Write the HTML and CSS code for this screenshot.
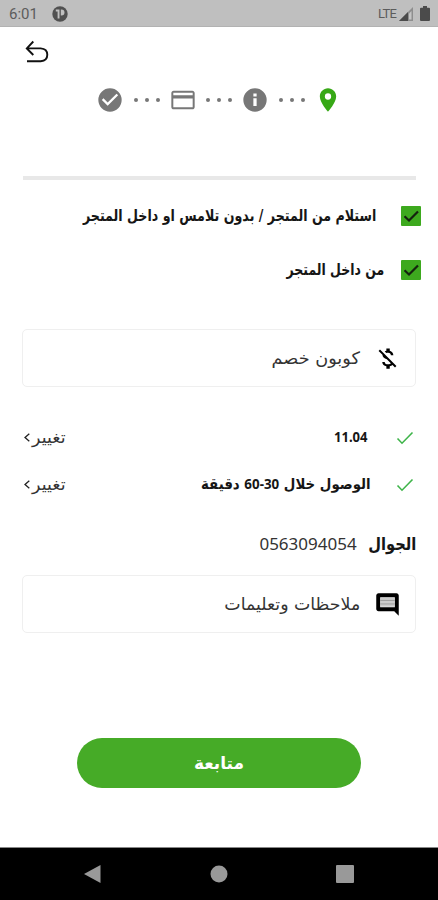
FILE: index.html
```html
<!DOCTYPE html>
<html lang="ar">
<head>
<meta charset="utf-8">
<meta name="viewport" content="width=device-width">
<title>متابعة الطلب</title>
<link rel="stylesheet" href="styles.css">
</head>
<body>
<header class="status">
  <span class="clock">6:01</span>
  <svg class="app-dot" viewBox="0 0 16 16"><circle cx="8" cy="8" r="7.7" fill="#505050"/><path d="M3.800 3.500h3.700v9H5.600V5.600H3.800zM8.800 3.500h.700a3 3 0 0 1 0 6h-.700z" fill="#bfbfbf"/></svg>
  <span class="lte">LTE</span>
  <svg class="signal" viewBox="0 0 14 14"><path d="M0 14 14 0v14z" fill="#8e8e8e"/><path d="M0 14 9 5v9z" fill="#4b4b4b"/><path d="M10 6.5 12.5 4v8.5H10z" fill="#c5c5c5"/></svg>
  <svg class="battery" viewBox="0 0 10 15"><path d="M3 0h4v1.7h2q1 0 1 1V14q0 1-1 1H1q-1 0-1-1V2.700q0-1 1-1h2z" fill="#4b4b4b"/></svg>
</header>
<div class="toolbar">
  <svg class="back" viewBox="0 0 24 24"><path d="M8.300 1.500 1.800 8.400l6.500 6.600M2.200 8.400h13.500q6.600.5 6.600 6.300t-6.600 6.600H2" fill="none" stroke="#111" stroke-width="1.900"/></svg>
</div>
<div class="steps">
  <svg class="step" viewBox="0 0 24 24"><path d="M12 2a10 10 0 1 0 0 20 10 10 0 0 0 0-20zm-2 15-5-5 1.410-1.410L10 14.170l7.590-7.590L19 8z"/></svg>
  <span class="dots"><i></i><i></i><i></i></span>
  <svg class="step" viewBox="0 0 24 24"><path d="M20 4H4c-1.110 0-1.990.890-1.990 2L2 18c0 1.110.890 2 2 2h16c1.110 0 2-.890 2-2V6c0-1.110-.890-2-2-2zm.300 14.300H3.700v-7.500h16.600zm0-10.300H3.700V5.700h16.600z"/></svg>
  <span class="dots"><i></i><i></i><i></i></span>
  <svg class="step" viewBox="0 0 24 24"><path d="M12 2a10 10 0 1 0 0 20 10 10 0 0 0 0-20zm1.400 15.200h-2.800v-6.700h2.800zm0-8.100h-2.800V6.500h2.800z"/></svg>
  <span class="dots"><i></i><i></i><i></i></span>
  <svg class="step current" viewBox="0 0 24 24"><path d="M12 2C8.130 2 5 5.130 5 9c0 5.250 7 13 7 13s7-7.750 7-13c0-3.870-3.130-7-7-7zm0 9.700a2.700 2.700 0 1 1 0-5.400 2.700 2.700 0 0 1 0 5.400z"/></svg>
</div>
<main class="content" dir="rtl">
  <hr class="rule">
  <div class="option option-store">
    <svg class="box" viewBox="0 0 20 20"><path d="M3.500 10.200 8 14.500l9-9"/></svg>
    <span class="label label-store">استلام من المتجر / بدون تلامس او داخل المتجر</span>
  </div>
  <div class="option option-inside">
    <svg class="box" viewBox="0 0 20 20"><path d="M3.500 10.200 8 14.500l9-9"/></svg>
    <span class="label label-inside">من داخل المتجر</span>
  </div>
  <div class="field">
    <svg class="field-icon" viewBox="0 0 24 24"><path d="M12.500 6.900c1.780 0 2.440.850 2.500 2.100h2.210c-.070-1.720-1.120-3.300-3.210-3.810V3h-3v2.160c-.530.120-1.030.300-1.480.540l1.470 1.470c.410-.170.910-.270 1.510-.270zM5.330 4.060 4.060 5.330 7.500 8.770c0 2.080 1.560 3.210 3.910 3.910l3.510 3.510c-.340.480-1.050.910-2.420.910-2.060 0-2.870-.920-2.980-2.100h-2.200c.120 2.190 1.760 3.420 3.680 3.830V21h3v-2.150c.960-.180 1.820-.550 2.450-1.120l2.220 2.220 1.270-1.270z"/></svg>
    <span class="hint hint-coupon">كوبون خصم</span>
  </div>
  <div class="row row-price">
    <svg class="tick" viewBox="0 0 18 14"><path d="m1.500 7.500 4.500 4.700L16.500 1.500"/></svg>
    <span class="value value-price">11.04</span>
    <span class="change"><span class="change-text">تغيير</span><svg class="chevron" viewBox="0 0 6 9"><path d="M5.300.700 1 4.500l4.300 3.800"/></svg></span>
  </div>
  <div class="row row-time">
    <svg class="tick" viewBox="0 0 18 14"><path d="m1.500 7.500 4.500 4.700L16.500 1.500"/></svg>
    <span class="value value-time">الوصول خلال <bdi dir="ltr">60-30</bdi> دقيقة</span>
    <span class="change"><span class="change-text">تغيير</span><svg class="chevron" viewBox="0 0 6 9"><path d="M5.300.700 1 4.500l4.300 3.800"/></svg></span>
  </div>
  <div class="phone">
    <span class="phone-label">الجوال</span>
    <span class="phone-number">0563094054</span>
  </div>
  <div class="field">
    <svg class="field-icon" viewBox="0 0 24 24"><path d="M6 6h12v8H6z" fill="#ccc"/><path fill-rule="evenodd" d="M22 4c0-1.100-.900-2-2-2H4c-1.100 0-2 .900-2 2v12c0 1.100.900 2 2 2h14l4 4zM18.500 14.500h-13v-9h13z"/><path d="M5.500 8.400h13M5.500 11.500h13" stroke="#999" stroke-width=".8"/></svg>
    <span class="hint hint-notes">ملاحظات وتعليمات</span>
  </div>
  <button class="submit"><span class="submit-text">متابعة</span></button>
</main>
<nav class="nav">
  <svg viewBox="0 0 18 18"><path d="M0 9 16.500 0v18z"/></svg>
  <svg viewBox="0 0 18 18"><circle cx="9" cy="9" r="8.500"/></svg>
  <svg viewBox="0 0 18 18"><rect width="18" height="18" rx="1"/></svg>
</nav>
</body>
</html>
```
FILE: styles.css
```css
* { box-sizing: border-box; }
body {
  margin: 0;
  width: 438px;
  height: 900px;
  display: flex;
  flex-direction: column;
  overflow: hidden;
  background: #fff;
  color: #161616;
  font-family: "DejaVu Sans", sans-serif;
}
svg { display: block; flex: none; }
span { white-space: nowrap; }

.status {
  height: 27px;
  flex: none;
  display: flex;
  align-items: center;
  padding: 1px 8px 0 9px;
  background: #bfbfbf;
  border-bottom: 1px solid #b2b2b2;
  color: #5c5c5c;
  font-family: Roboto, sans-serif;
}
.clock { width: 43px; font-size: 15px; }
.app-dot { width: 16px; height: 16px; }
.lte { margin-left: auto; margin-right: 3px; font-size: 13px; letter-spacing: -0.8px; }
.signal { width: 14px; height: 14px; margin-right: 7px; }
.battery { width: 10px; height: 15px; }

.toolbar { height: 58px; flex: none; padding: 13px 0 0 25px; }
.back { width: 24px; height: 24px; }

.steps {
  height: 29px;
  flex: none;
  display: flex;
  justify-content: center;
  align-items: center;
}
.step { width: 28px; height: 28px; fill: #777; }
.current { fill: #37a816; }
.dots { width: 44.5px; display: flex; justify-content: center; gap: 7px; }
.dots i { width: 4px; height: 4px; border-radius: 50%; background: #777; }

.content { flex: 1; display: flex; flex-direction: column; padding: 62px 22px 0; }
.rule { width: 393px; height: 4px; flex: none; margin: 0 0 26px; border: 0; background: #e8e8e8; }
.option { display: flex; align-items: center; height: 20px; margin-right: -5px; }
.option-inside { margin: 34px -5px 49px 0; }
.box { width: 20px; height: 20px; background: #3da91e; border-radius: 1px; }
.box path { fill: none; stroke: #14230e; stroke-width: 2.2; }
.label { font-size: 16px; font-weight: bold; line-height: 20px; transform-origin: right center; }
.label-store { margin-right: 25px; transform: scaleX(0.79); }
.label-inside { margin-right: 17px; transform: scaleX(0.78); }

.field {
  height: 58px;
  flex: none;
  display: flex;
  align-items: center;
  padding-right: 14px;
  border: 1px solid #efefef;
  border-radius: 5px;
}
.field-icon { width: 27px; height: 27px; }
.hint { margin-right: 14px; font-size: 17px; color: #333; transform-origin: right center; }
.hint-coupon { transform: scaleX(1.04); }
.hint-notes { transform: scaleX(1.02); }

.row { height: 47px; flex: none; display: flex; align-items: center; padding-right: 2px; }
.row-price { margin-top: 27px; }
.tick { width: 18px; height: 14px; }
.tick path { fill: none; stroke: #3eb449; stroke-width: 1.6; }
.value { font-size: 15px; font-weight: bold; line-height: 20px; transform-origin: right center; }
.value-price { margin-right: 28px; margin-top: -3px; font-family: "Noto Sans", sans-serif; transform: scaleX(0.87); }
.value-time { margin-right: 25px; margin-top: -2px; transform: scaleX(0.89); }
.value-time bdi { font-family: "Noto Sans", sans-serif; }
.change { margin-right: auto; display: flex; align-items: center; gap: 2px; padding-left: 2px; color: #333; font-size: 16.5px; }
.change-text { transform-origin: left center; transform: scaleX(1.06); }
.chevron { width: 6px; height: 9px; }
.chevron path { fill: none; stroke: #222; stroke-width: 1.3; }

.phone { height: 67px; flex: none; display: flex; align-items: center; padding-top: 4px; }
.phone-label { font-size: 17.5px; font-weight: bold; transform-origin: right center; transform: scaleX(0.84); }
.phone-number { margin-right: 2px; font-family: "Noto Sans", sans-serif; font-size: 17px; color: #333; }

.submit {
  width: 284px;
  height: 50px;
  flex: none;
  align-self: center;
  margin-top: 105px;
  padding: 0;
  border: 0;
  border-radius: 25px;
  background: #46ab27;
  color: #fff;
  font: bold 17px "DejaVu Sans", sans-serif;
}
.submit-text { display: inline-block; }

.nav {
  height: 53px;
  flex: none;
  display: flex;
  justify-content: space-between;
  align-items: center;
  padding: 0 84px;
  background: #000;
  border-top: 1px solid #888;
}
.nav svg { width: 18px; height: 18px; fill: #999; }
```
